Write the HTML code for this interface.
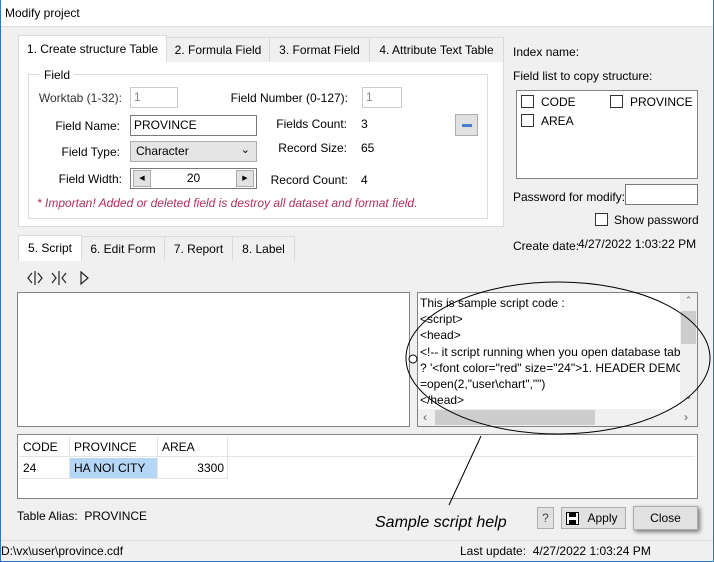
<!DOCTYPE html>
<html><head><meta charset="utf-8"><style>
*{box-sizing:border-box;margin:0;padding:0}
body{width:714px;height:562px;background:#f0f0f0;font-family:"Liberation Sans",sans-serif;font-size:12px;color:#000;position:relative;overflow:hidden}
.a{position:absolute;white-space:nowrap}
.tb{position:absolute;background:#fff;border:1px solid #7a7a7a;padding:2px 3px;height:21px;line-height:15px}
.dis{border-color:#ccc;color:#888}
.tab{position:absolute;border:1px solid #dadada;border-bottom:none;background:#f0f0f0;text-align:center;line-height:24px;height:25px}
.cb{position:absolute;width:13px;height:13px;border:1px solid #333;background:#fff}
.btn{position:absolute;border:1px solid #adadad;background:#e1e1e1;text-align:center}
.r{text-align:right}
</style></head><body>
<div class="a" style="left:0;top:0;width:714px;height:27px;background:#fff;border-bottom:1px solid #ddd"></div>
<div class="a" style="left:0;top:0;width:1px;height:562px;background:#2b79c6"></div>
<div class="a" style="left:713px;top:0;width:1px;height:562px;background:#2b79c6"></div>
<div class="a" style="left:0;top:561px;width:714px;height:1px;background:#2b79c6"></div>
<div class="a" style="left:5px;top:6px">Modify project</div>

<div class="a" style="left:18px;top:61px;width:486px;height:166px;background:#fff;border:1px solid #dadada"></div>
<div class="tab" style="left:166px;top:37px;width:104px">2. Formula Field</div>
<div class="tab" style="left:269px;top:37px;width:101px">3. Format Field</div>
<div class="tab" style="left:369px;top:37px;width:135px">4. Attribute Text Table</div>
<div class="tab" style="left:18px;top:35px;width:149px;height:27px;background:#fff;line-height:27px">1. Create structure Table</div>

<div class="a" style="left:28px;top:74px;width:460px;height:145px;border:1px solid #dcdcdc"></div>
<div class="a" style="left:40px;top:68px;background:#fff;padding:0 4px">Field</div>
<div class="a r" style="left:20px;top:91px;width:102px;color:#333">Worktab (1-32):</div>
<div class="tb dis" style="left:130px;top:87px;width:48px">1</div>
<div class="a r" style="left:200px;top:91px;width:148px">Field Number (0-127):</div>
<div class="tb dis" style="left:362px;top:87px;width:40px">1</div>
<div class="a r" style="left:20px;top:119px;width:100px">Field Name:</div>
<div class="tb" style="left:130px;top:115px;width:127px">PROVINCE</div>
<div class="a r" style="left:20px;top:145px;width:100px">Field Type:</div>
<div class="tb" style="left:130px;top:141px;width:127px;background:#e5e5e5;border-color:#adadad;padding-left:5px">Character<span style="position:absolute;right:6px;top:1px;font-size:11px">&#8964;</span></div>
<div class="a r" style="left:20px;top:172px;width:102px">Field Width:</div>
<div class="tb" style="left:130px;top:168px;width:127px;text-align:center;padding:2px 0">20
 <div class="btn" style="left:2px;top:1px;width:18px;height:17px;font-size:7px;line-height:16px">&#9664;</div>
 <div class="btn" style="right:2px;top:1px;width:18px;height:17px;font-size:7px;line-height:16px">&#9654;</div></div>
<div class="a r" style="left:240px;top:117px;width:107px">Fields Count:</div><div class="a" style="left:361px;top:117px">3</div>
<div class="a r" style="left:240px;top:141px;width:107px">Record Size:</div><div class="a" style="left:361px;top:141px">65</div>
<div class="a r" style="left:240px;top:173px;width:108px">Record Count:</div><div class="a" style="left:361px;top:173px">4</div>
<div class="btn" style="left:455px;top:114px;width:23px;height:22px"><div style="margin:9px auto 0;width:10px;height:3px;background:#4a7fd0"></div></div>
<div class="a" style="left:37px;top:196px;color:#b0305e;font-style:italic">* Importan! Added or deleted field is destroy all dataset and format field.</div>

<div class="a" style="left:513px;top:45px">Index name:</div>
<div class="a" style="left:513px;top:69px">Field list to copy structure:</div>
<div class="a" style="left:516px;top:90px;width:182px;height:89px;background:#fff;border:1px solid #828282"></div>
<div class="cb" style="left:521px;top:95px"></div><div class="a" style="left:541px;top:95px">CODE</div>
<div class="cb" style="left:610px;top:95px"></div><div class="a" style="left:630px;top:95px">PROVINCE</div>
<div class="cb" style="left:521px;top:114px"></div><div class="a" style="left:541px;top:114px">AREA</div>
<div class="a" style="left:513px;top:190px">Password for modify:</div>
<div class="tb" style="left:625px;top:184px;width:73px"></div>
<div class="cb" style="left:595px;top:213px"></div><div class="a" style="left:614px;top:213px">Show password</div>
<div class="a" style="left:513px;top:239px">Create date:</div><div class="a" style="left:578px;top:237px">4/27/2022 1:03:22 PM</div>

<div class="tab" style="left:81px;top:236px;width:84px">6. Edit Form</div>
<div class="tab" style="left:164px;top:236px;width:69px">7. Report</div>
<div class="tab" style="left:232px;top:236px;width:63px">8. Label</div>
<div class="tab" style="left:18px;top:235px;width:64px;height:26px;background:#fff">5. Script</div>
<svg class="a" style="left:26px;top:268px" width="70" height="20" fill="none" stroke="#222" stroke-width="1.2">
<path d="M6 5 L2 10 L6 15 M9 3 L9 17 M12 5 L16 10 L12 15"/>
<path d="M26 5 L30 10 L26 15 M33 3 L33 17 M40 5 L36 10 L40 15"/>
<path d="M55 4 L62 10 L55 16 Z"/>
</svg>
<div class="a" style="left:17px;top:292px;width:393px;height:135px;background:#fff;border:1px solid #828282"></div>
<div class="a" style="left:417px;top:292px;width:281px;height:135px;background:#fff;border:1px solid #828282;overflow:hidden">
<div style="position:absolute;left:2px;top:2px;line-height:16.2px;white-space:pre">This is sample script code :
&lt;script&gt;
&lt;head&gt;
&lt;!-- it script running when you open database tab
? '&lt;font color="red" size="24"&gt;1. HEADER DEMO
=open(2,"user\chart","")
&lt;/head&gt;</div>
<div style="position:absolute;right:0;top:0;width:17px;height:116px;background:#f0f0f0"><div style="position:absolute;top:18px;left:1px;width:15px;height:33px;background:#cdcdcd"></div><div style="position:absolute;top:2px;width:17px;text-align:center;font-size:9px;color:#606060">&#8963;</div><div style="position:absolute;top:98px;width:17px;text-align:center;font-size:9px;color:#606060">&#8964;</div></div>
<div style="position:absolute;left:0;bottom:0;width:279px;height:17px;background:#f0f0f0"><div style="position:absolute;left:17px;top:1px;width:160px;height:15px;background:#cdcdcd"></div><div style="position:absolute;left:5px;top:1px;color:#606060">&#8249;</div><div style="position:absolute;left:266px;top:1px;color:#606060">&#8250;</div></div>
</div>

<div class="a" style="left:17px;top:434px;width:681px;height:65px;background:#fff;border:1px solid #828282"></div>
<div class="a" style="left:19px;top:436px;width:676px;height:21px;border-bottom:1px solid #e5e5e5"></div>
<div class="a" style="left:69px;top:436px;width:1px;height:42px;background:#e5e5e5"></div>
<div class="a" style="left:157px;top:436px;width:1px;height:42px;background:#e5e5e5"></div>
<div class="a" style="left:227px;top:436px;width:1px;height:42px;background:#e5e5e5"></div>
<div class="a" style="left:19px;top:478px;width:209px;height:1px;background:#e5e5e5"></div>
<div class="a" style="left:70px;top:458px;width:87px;height:20px;background:#b5d7f7"></div>
<div class="a" style="left:23px;top:440px">CODE</div><div class="a" style="left:74px;top:440px">PROVINCE</div><div class="a" style="left:162px;top:440px">AREA</div>
<div class="a" style="left:23px;top:461px">24</div><div class="a" style="left:74px;top:461px">HA NOI CITY</div><div class="a r" style="left:160px;top:461px;width:64px">3300</div>

<div class="a" style="left:17px;top:509px">Table Alias:&nbsp; PROVINCE</div>
<div class="a" style="left:375px;top:514px;font-size:16px;font-style:italic">Sample script help</div>

<svg class="a" style="left:0;top:0" width="714" height="562" fill="none" stroke="#000" stroke-width="1">
<ellipse cx="558" cy="358" rx="152" ry="76"/>
<circle cx="413" cy="359" r="4" fill="#fff"/>
<path d="M481 436 L449 505"/>
</svg>

<div class="btn" style="left:537px;top:507px;width:17px;height:22px;line-height:20px;color:#444">?</div>
<div class="btn" style="left:561px;top:507px;width:65px;height:22px;line-height:20px;padding-left:18px">Apply
<svg style="position:absolute;left:4px;top:4px" width="13" height="13"><rect x="0.5" y="0.5" width="12" height="12" fill="#fff" stroke="#000"/><rect x="3" y="1" width="7" height="4" fill="#000"/><rect x="3" y="8" width="7" height="5" fill="#000"/></svg></div>
<div class="btn" style="left:633px;top:506px;width:65px;height:24px;line-height:22px;box-shadow:2px 2px 4px rgba(0,0,0,.5)">Close</div>

<div class="a" style="left:1px;top:540px;width:712px;height:1px;background:#dcdcdc"></div>
<div class="a" style="left:1px;top:544px">D:\vx\user\province.cdf</div>
<div class="a" style="left:460px;top:544px">Last update:&nbsp; 4/27/2022 1:03:24 PM</div>
</body></html>
